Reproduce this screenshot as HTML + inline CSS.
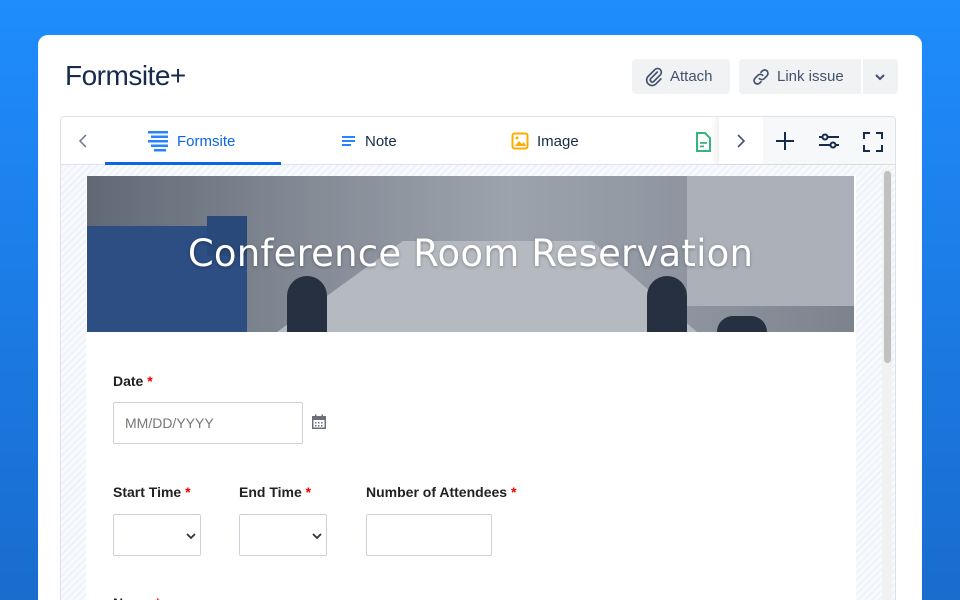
<!DOCTYPE html>
<html><head><meta charset="utf-8"><style>
*{box-sizing:border-box;margin:0;padding:0}
html,body{width:960px;height:600px;overflow:hidden}
body{background:linear-gradient(180deg,#1f8dfd 0%,#1b78e0 60%,#1a6ccd 100%);font-family:"Liberation Sans",sans-serif;position:relative}
.card{position:absolute;left:38px;top:35px;width:884px;height:565px;background:#fff;border-radius:10px 10px 0 0}
.title{position:absolute;left:65px;top:60px;font-size:28px;color:#172b4d;font-weight:400;letter-spacing:-0.5px}
.btn{position:absolute;top:59px;height:35px;background:#f1f2f4;border-radius:4px;color:#42526e;font-size:15px;display:flex;align-items:center}
.panel{position:absolute;left:60px;top:116px;width:836px;height:484px;border:1px solid #dfe1e6;border-bottom:none;border-radius:4px 4px 0 0;overflow:hidden}
.tabs{position:absolute;left:0;top:0;width:836px;height:48px;border-bottom:1px solid #dfe1e6;background:#fff}
.tab{position:absolute;top:12px;height:24px;font-size:15px;color:#172b4d;display:flex;align-items:center;gap:8px}
.content{position:absolute;left:0;top:48px;width:836px;height:436px;background:repeating-linear-gradient(135deg,#eef3fb 0 2px,#f8fafe 2px 5px);overflow:hidden}
.form{position:absolute;left:25px;top:11px;width:770px;height:425px;background:#fff;overflow:hidden}
.hero{position:absolute;left:1px;top:0;width:767px;height:156px;overflow:hidden;background:linear-gradient(90deg,#6d7580 0%,#9aa0a8 30%,#b7bcc3 55%,#a9aeb6 75%,#8f959d 100%)}
.lbl{position:absolute;font-size:14px;font-weight:bold;color:#222}
.lbl b{color:#e00}
.inp{position:absolute;border:1px solid #cfd0dc;border-radius:2px;height:42px;background:#fff}
</style></head><body>
<div class="card"></div>
<div class="title">Formsite+</div>
<div class="btn" style="left:632px;width:98px;padding-left:12px"><svg width="20" height="20" viewBox="0 0 24 24" fill="none" stroke="#42526e" stroke-width="2" stroke-linecap="round"><path d="M16 6l-8 8a2.5 2.5 0 0 0 3.5 3.5l8-8a4.5 4.5 0 0 0-6.4-6.4l-8 8a6.5 6.5 0 0 0 9.2 9.2l6-6"/></svg><span style="margin-left:6px">Attach</span></div>
<div class="btn" style="left:739px;width:159px;padding-left:12px"><svg width="20" height="20" viewBox="0 0 24 24" fill="none" stroke="#42526e" stroke-width="2" stroke-linecap="round"><path d="M10 14a4 4 0 0 0 5.7 0l3.5-3.5a4 4 0 0 0-5.7-5.7L12 6.3M14 10a4 4 0 0 0-5.7 0l-3.5 3.5a4 4 0 0 0 5.7 5.7L12 17.7"/></svg><span style="margin-left:6px">Link issue</span><span style="position:absolute;left:122px;top:0;width:2px;height:35px;background:#fff"></span><svg style="position:absolute;left:135px;top:13px" width="12" height="10" viewBox="0 0 12 10"><path d="M2 3l4 4 4-4" fill="none" stroke="#42526e" stroke-width="2"/></svg></div>
<div class="panel">
<div class="tabs">
<svg style="position:absolute;left:16px;top:16px" width="12" height="16" viewBox="0 0 12 16"><path d="M9 2L3 8l6 6" fill="none" stroke="#6b778c" stroke-width="1.5"/></svg>
<div class="tab" style="left:86px;color:#0c66e4"><svg width="22" height="22" viewBox="0 0 22 22" fill="#2684ff"><rect x="1" y="1" width="20" height="2.5"/><rect x="4" y="5.5" width="17" height="2.5"/><rect x="1" y="10" width="20" height="2.5"/><rect x="4" y="14.5" width="17" height="2.5"/><rect x="7" y="19" width="12" height="2.5"/></svg>Formsite</div>
<div style="position:absolute;left:44px;top:45px;width:176px;height:3px;background:#0c66e4"></div>
<div class="tab" style="left:280px"><svg width="16" height="16" viewBox="0 0 16 16" fill="#2684ff"><rect x="1" y="3" width="13" height="2"/><rect x="1" y="7" width="13" height="2"/><rect x="1" y="11" width="9" height="2"/></svg>Note</div>
<div class="tab" style="left:450px"><svg width="18" height="18" viewBox="0 0 18 18"><rect x="1.5" y="1.5" width="15" height="15" rx="2" fill="none" stroke="#ffab00" stroke-width="2"/><path d="M4 14l4-5 3 3 2-2 2 4z" fill="#ffab00"/><circle cx="6" cy="6" r="1.5" fill="#ffab00"/></svg>Image</div>
<svg style="position:absolute;left:634px;top:15px" width="16" height="20" viewBox="0 0 16 20"><path d="M2 1h8l5 5v13H2z" fill="none" stroke="#36b37e" stroke-width="2"/><rect x="5" y="10" width="7" height="1.8" fill="#36b37e"/><rect x="5" y="13.5" width="4" height="1.8" fill="#36b37e"/></svg>
<div style="position:absolute;left:658px;top:0;width:178px;height:47px;background:#fff;box-shadow:-4px 0 6px rgba(0,0,0,.06)"></div>
<div style="position:absolute;left:702px;top:0;width:134px;height:47px;background:#f7f8f9"></div>
<svg style="position:absolute;left:674px;top:16px" width="12" height="16" viewBox="0 0 12 16"><path d="M3 2l6 6-6 6" fill="none" stroke="#42526e" stroke-width="1.6"/></svg>
<svg style="position:absolute;left:714px;top:14px" width="20" height="20" viewBox="0 0 20 20"><path d="M10 1v18M1 10h18" stroke="#172b4d" stroke-width="2"/></svg>
<svg style="position:absolute;left:757px;top:14px" width="22" height="20" viewBox="0 0 22 20" fill="none" stroke="#172b4d" stroke-width="2"><path d="M1 6h20M1 14h20"/><circle cx="7" cy="6" r="2.5" fill="#f7f8f9"/><circle cx="15" cy="14" r="2.5" fill="#f7f8f9"/></svg>
<svg style="position:absolute;left:802px;top:15px" width="20" height="20" viewBox="0 0 20 20" fill="none" stroke="#172b4d" stroke-width="2"><path d="M1 7V1h6M13 1h6v6M19 13v6h-6M7 19H1v-6"/></svg>
</div>
<div class="content">
<div class="form">
<div class="hero">
<div style="position:absolute;left:0;top:50px;width:160px;height:106px;background:#2f5590"></div>
<div style="position:absolute;left:120px;top:40px;width:40px;height:40px;background:#2a4f86"></div>
<div style="position:absolute;left:190px;top:65px;width:420px;height:91px;background:#d5d8dc;clip-path:polygon(30% 0,75% 0,100% 100%,0 100%)"></div>
<div style="position:absolute;left:200px;top:100px;width:40px;height:56px;background:#26303f;border-radius:20px 20px 0 0"></div>
<div style="position:absolute;left:560px;top:100px;width:40px;height:56px;background:#26303f;border-radius:20px 20px 0 0"></div>
<div style="position:absolute;left:630px;top:140px;width:50px;height:16px;background:#26303f;border-radius:25px 25px 0 0"></div>
<div style="position:absolute;left:600px;top:0;width:167px;height:130px;background:#c8ccd2"></div>
<div style="position:absolute;left:0;top:0;width:767px;height:156px;background:rgba(40,50,70,.18)"></div>
<div style="position:absolute;left:0;top:56px;width:767px;text-align:center;color:#fff;font-size:37px;font-family:'DejaVu Sans',sans-serif;letter-spacing:0.2px;text-shadow:0 1px 3px rgba(0,0,0,.3)">Conference Room Reservation</div>
</div>
<div class="lbl" style="left:27px;top:197px">Date <b>*</b></div>
<div class="inp" style="left:27px;top:226px;width:190px;font-size:14px;color:#777;padding:12px 11px">MM/DD/YYYY</div>
<svg style="position:absolute;left:225px;top:238px" width="16" height="16" viewBox="0 0 16 16"><rect x="1" y="2" width="14" height="13" fill="#6b6f7a"/><rect x="2.5" y="6" width="11" height="7.5" fill="#fff"/><g fill="#6b6f7a"><rect x="4" y="8" width="1.5" height="1.5"/><rect x="7" y="8" width="1.5" height="1.5"/><rect x="10" y="8" width="1.5" height="1.5"/><rect x="4" y="11" width="1.5" height="1.5"/><rect x="7" y="11" width="1.5" height="1.5"/><rect x="10" y="11" width="1.5" height="1.5"/></g><rect x="4" y="0.5" width="1.5" height="3" fill="#6b6f7a"/><rect x="10.5" y="0.5" width="1.5" height="3" fill="#6b6f7a"/></svg>
<div class="lbl" style="left:27px;top:308px">Start Time <b>*</b></div>
<div class="lbl" style="left:153px;top:308px">End Time <b>*</b></div>
<div class="lbl" style="left:280px;top:308px">Number of Attendees <b>*</b></div>
<div class="inp" style="left:27px;top:338px;width:88px"><svg style="position:absolute;left:72px;top:17px" width="10" height="8" viewBox="0 0 10 8"><path d="M1 2l4 4 4-4" fill="none" stroke="#333" stroke-width="1.8"/></svg></div>
<div class="inp" style="left:153px;top:338px;width:88px"><svg style="position:absolute;left:72px;top:17px" width="10" height="8" viewBox="0 0 10 8"><path d="M1 2l4 4 4-4" fill="none" stroke="#333" stroke-width="1.8"/></svg></div>
<div class="inp" style="left:280px;top:338px;width:126px"></div>
<div class="lbl" style="left:27px;top:419px">Name <b>*</b></div>
</div>
<div style="position:absolute;left:821px;top:4px;width:10px;height:432px;background:#f1f1f1"></div>
<div style="position:absolute;left:823px;top:6px;width:7px;height:192px;background:#c1c1c1;border-radius:4px"></div>
</div>
</div>
</body></html>
